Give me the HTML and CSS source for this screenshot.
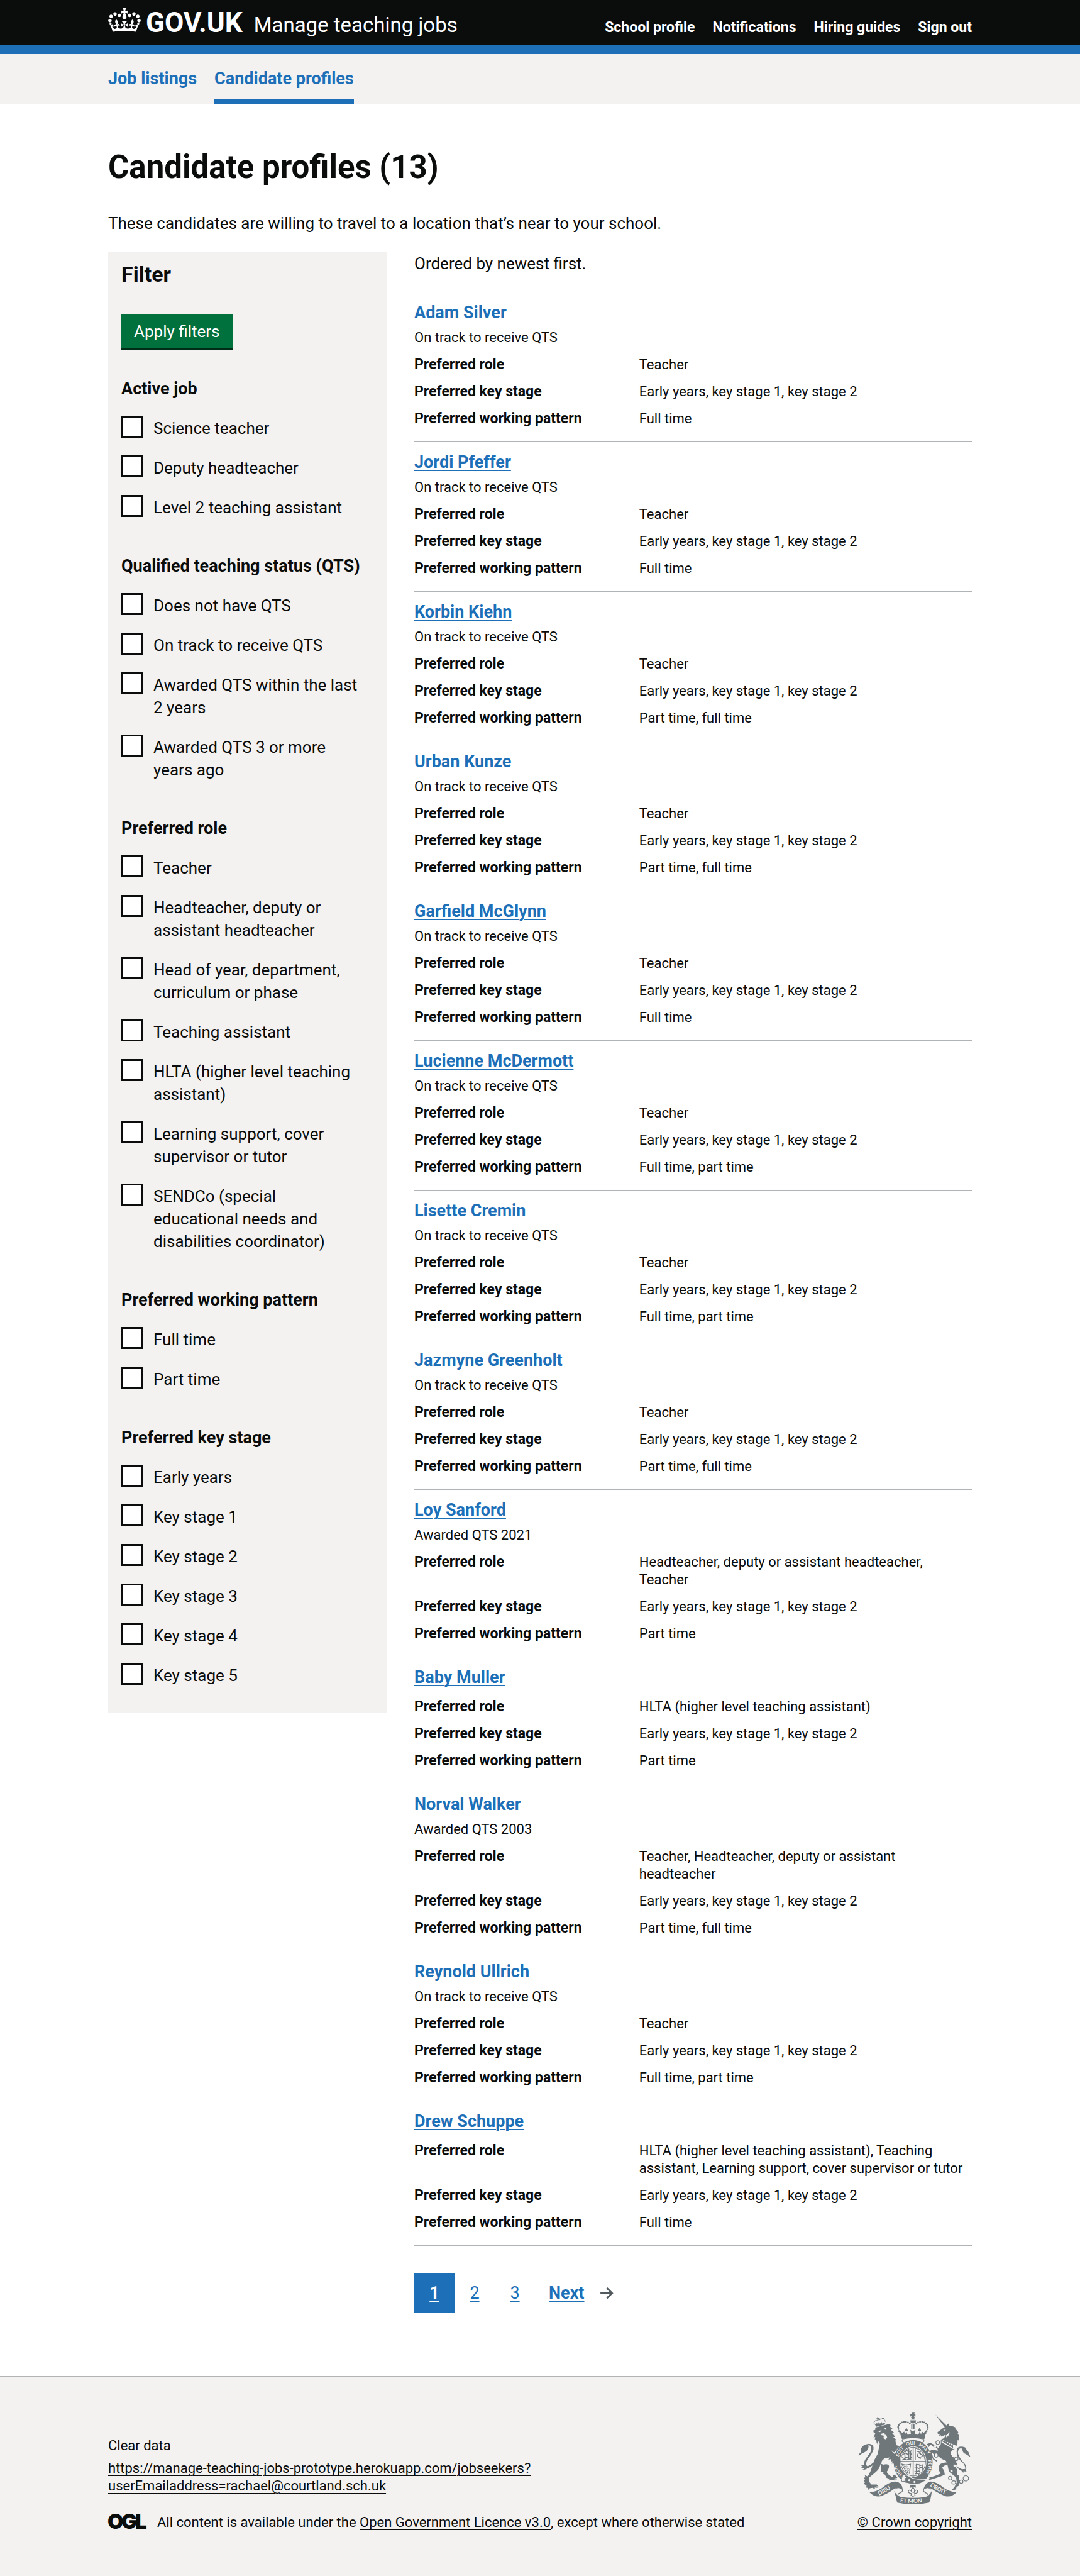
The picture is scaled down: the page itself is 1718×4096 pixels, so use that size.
FILE: index.html
```html
<!DOCTYPE html>
<html lang="en">
<head>
<meta charset="utf-8">
<meta name="viewport" content="width=device-width, initial-scale=1">
<title>Candidate profiles - Manage teaching jobs - GOV.UK</title>
<link rel="stylesheet" href="styles.css">
</head>
<body>
<header class="header">
  <div class="container header-inner">
    <a class="header-logo" href="#">
      <svg class="crown" viewBox="0 0 132 97" aria-hidden="true"><path fill="currentColor" fill-rule="evenodd" d="M25 30.2c3.5 1.5 7.7-.2 9.1-3.7 1.5-3.6-.2-7.8-3.9-9.2-3.6-1.4-7.6.3-9.1 3.9-1.4 3.5.3 7.5 3.9 9zM9 39.5c3.6 1.5 7.8-.2 9.2-3.7 1.5-3.6-.2-7.8-3.9-9.1-3.6-1.5-7.6.2-9.1 3.8-1.4 3.5.3 7.5 3.8 9zM4.4 57.2c3.5 1.5 7.7-.2 9.1-3.8 1.5-3.6-.2-7.7-3.9-9.1-3.5-1.5-7.6.3-9.1 3.8-1.4 3.5.3 7.6 3.9 9.1zm38.3-21.4c3.5 1.5 7.7-.2 9.1-3.8 1.5-3.6-.2-7.7-3.9-9.1-3.6-1.5-7.6.3-9.1 3.8-1.3 3.6.4 7.7 3.9 9.1zm64.4-5.6c-3.6 1.5-7.8-.2-9.1-3.7-1.5-3.6.2-7.8 3.8-9.2 3.6-1.4 7.7.3 9.2 3.9 1.3 3.5-.4 7.5-3.9 9zm15.9 9.3c-3.6 1.5-7.7-.2-9.1-3.7-1.5-3.6.2-7.8 3.7-9.1 3.6-1.5 7.7.2 9.2 3.8 1.5 3.5-.3 7.5-3.8 9zm4.7 17.7c-3.6 1.5-7.8-.2-9.2-3.8-1.5-3.6.2-7.7 3.9-9.1 3.6-1.5 7.7.3 9.2 3.8 1.3 3.5-.4 7.6-3.9 9.1zM89.3 35.8c-3.6 1.5-7.8-.2-9.2-3.8-1.4-3.6.2-7.7 3.9-9.1 3.6-1.5 7.7.3 9.2 3.8 1.4 3.6-.3 7.7-3.9 9.1zM69.7 17.7l8.9 4.7V9.3l-8.9 2.8c-.2-.3-.5-.6-.9-.9L72.4 0H59.6l3.5 11.2c-.3.3-.6.5-.9.9l-8.8-2.8v13.1l8.8-4.7c.3.3.6.7.9.9l-5 15.4v.1c-.2.8-.4 1.6-.4 2.4 0 4.1 3.1 7.5 7 8.1h.2c.3 0 .7.1 1 .1.4 0 .7 0 1-.1h.2c4-.6 7.1-4.1 7.1-8.1 0-.8-.1-1.7-.4-2.4V34l-5.1-15.4c.4-.2.7-.6 1-.9zM66 92.8c16.9 0 32.8 1.1 47.1 3.2 4-16.9 8.9-26.7 14-33.5l-9.6-3.4c1 4.9 1.1 7.2 0 10.2-1.5-1.4-3-4.3-4.2-8.7L108.6 76c2.8-2 5-3.2 7.5-3.3-4.4 9.4-10 11.9-13.6 11.2-4.3-.8-6.3-4.6-5.6-7.9 1-4.7 5.7-5.9 8-.5 4.3-8.7-3-11.4-7.6-8.8 7.1-7.2 7.9-13.5 2.1-21.1-8 6.1-8.1 12.3-4.5 20.8-4.7-5.4-12.1-2.5-9.5 6.2 3.4-5.2 7.9-2 7.2 3.1-.6 4.3-6.4 7.8-13.5 7.2-10.3-.9-10.9-8-11.2-13.8 2.5-.5 7.1 1.8 11 7.3L80.2 60c-4.1 4.4-8 5.3-12.3 5.4 1.4-4.4 8-11.6 8-11.6H55.5s6.4 7.2 7.9 11.6c-4.2-.1-8-1-12.3-5.4l1.4 16.4c3.9-5.5 8.5-7.7 10.9-7.3-.3 5.8-.9 12.8-11.1 13.8-7.2.6-12.9-2.9-13.5-7.2-.7-5 3.8-8.3 7.1-3.1 2.7-8.7-4.6-11.6-9.4-6.2 3.7-8.5 3.6-14.7-4.6-20.8-5.8 7.6-5 13.9 2.2 21.1-4.7-2.6-11.9.1-7.7 8.8 2.3-5.5 7.1-4.2 8.1.5.7 3.3-1.3 7.1-5.7 7.9-3.5.7-9-1.8-13.5-11.2 2.5.1 4.7 1.3 7.5 3.3l-4.7-15.4c-1.2 4.4-2.7 7.2-4.3 8.7-1.1-3-.9-5.3 0-10.2l-9.5 3.4c5 6.9 9.9 16.7 14 33.5 14.8-2.1 30.8-3.2 47.7-3.2z"/></svg>
      <span class="logotype">GOV.UK</span>
    </a>
    <a class="service-name" href="#">Manage teaching jobs</a>
    <nav class="account-nav" aria-label="Account">
      <a href="#">School profile</a>
      <a href="#">Notifications</a>
      <a href="#">Hiring guides</a>
      <a href="#">Sign out</a>
    </nav>
  </div>
</header>
<nav class="primary-nav" aria-label="Primary">
  <div class="container primary-nav-inner">
    <a class="primary-link" href="#">Job listings</a>
    <a class="primary-link primary-link-current" href="#" aria-current="page">Candidate profiles</a>
  </div>
</nav>

<main class="container main">
  <h1 class="page-title">Candidate profiles (13)</h1>
  <p class="intro">These candidates are willing to travel to a location that’s near to your school.</p>
  <div class="columns">
    <form class="filter">
      <h2 class="filter-title">Filter</h2>
      <button class="button" type="button">Apply filters</button>

      <fieldset class="group">
        <legend>Active job</legend>
        <div class="option"><input type="checkbox" id="job-1"><label for="job-1">Science teacher</label></div>
        <div class="option"><input type="checkbox" id="job-2"><label for="job-2">Deputy headteacher</label></div>
        <div class="option"><input type="checkbox" id="job-3"><label for="job-3">Level 2 teaching assistant</label></div>
      </fieldset>

      <fieldset class="group">
        <legend>Qualified teaching status (QTS)</legend>
        <div class="option"><input type="checkbox" id="qts-1"><label for="qts-1">Does not have QTS</label></div>
        <div class="option"><input type="checkbox" id="qts-2"><label for="qts-2">On track to receive QTS</label></div>
        <div class="option"><input type="checkbox" id="qts-3"><label for="qts-3">Awarded QTS within the last 2 years</label></div>
        <div class="option"><input type="checkbox" id="qts-4"><label for="qts-4">Awarded QTS 3 or more years ago</label></div>
      </fieldset>

      <fieldset class="group">
        <legend>Preferred role</legend>
        <div class="option"><input type="checkbox" id="role-1"><label for="role-1">Teacher</label></div>
        <div class="option"><input type="checkbox" id="role-2"><label for="role-2">Headteacher, deputy or assistant headteacher</label></div>
        <div class="option"><input type="checkbox" id="role-3"><label for="role-3">Head of year, department, curriculum or phase</label></div>
        <div class="option"><input type="checkbox" id="role-4"><label for="role-4">Teaching assistant</label></div>
        <div class="option"><input type="checkbox" id="role-5"><label for="role-5">HLTA (higher level teaching assistant)</label></div>
        <div class="option"><input type="checkbox" id="role-6"><label for="role-6">Learning support, cover supervisor or tutor</label></div>
        <div class="option"><input type="checkbox" id="role-7"><label for="role-7">SENDCo (special educational needs and disabilities coordinator)</label></div>
      </fieldset>

      <fieldset class="group">
        <legend>Preferred working pattern</legend>
        <div class="option"><input type="checkbox" id="pattern-1"><label for="pattern-1">Full time</label></div>
        <div class="option"><input type="checkbox" id="pattern-2"><label for="pattern-2">Part time</label></div>
      </fieldset>

      <fieldset class="group">
        <legend>Preferred key stage</legend>
        <div class="option"><input type="checkbox" id="stage-0"><label for="stage-0">Early years</label></div>
        <div class="option"><input type="checkbox" id="stage-1"><label for="stage-1">Key stage 1</label></div>
        <div class="option"><input type="checkbox" id="stage-2"><label for="stage-2">Key stage 2</label></div>
        <div class="option"><input type="checkbox" id="stage-3"><label for="stage-3">Key stage 3</label></div>
        <div class="option"><input type="checkbox" id="stage-4"><label for="stage-4">Key stage 4</label></div>
        <div class="option"><input type="checkbox" id="stage-5"><label for="stage-5">Key stage 5</label></div>
      </fieldset>
    </form>

    <section class="results">
      <p class="order">Ordered by newest first.</p>

      <article class="card">
        <h2><a href="#">Adam Silver</a></h2>
        <p class="status">On track to receive QTS</p>
        <dl>
          <dt>Preferred role</dt><dd>Teacher</dd>
          <dt>Preferred key stage</dt><dd>Early years, key stage 1, key stage 2</dd>
          <dt>Preferred working pattern</dt><dd>Full time</dd>
        </dl>
      </article>

      <article class="card">
        <h2><a href="#">Jordi Pfeffer</a></h2>
        <p class="status">On track to receive QTS</p>
        <dl>
          <dt>Preferred role</dt><dd>Teacher</dd>
          <dt>Preferred key stage</dt><dd>Early years, key stage 1, key stage 2</dd>
          <dt>Preferred working pattern</dt><dd>Full time</dd>
        </dl>
      </article>

      <article class="card">
        <h2><a href="#">Korbin Kiehn</a></h2>
        <p class="status">On track to receive QTS</p>
        <dl>
          <dt>Preferred role</dt><dd>Teacher</dd>
          <dt>Preferred key stage</dt><dd>Early years, key stage 1, key stage 2</dd>
          <dt>Preferred working pattern</dt><dd>Part time, full time</dd>
        </dl>
      </article>

      <article class="card">
        <h2><a href="#">Urban Kunze</a></h2>
        <p class="status">On track to receive QTS</p>
        <dl>
          <dt>Preferred role</dt><dd>Teacher</dd>
          <dt>Preferred key stage</dt><dd>Early years, key stage 1, key stage 2</dd>
          <dt>Preferred working pattern</dt><dd>Part time, full time</dd>
        </dl>
      </article>

      <article class="card">
        <h2><a href="#">Garfield McGlynn</a></h2>
        <p class="status">On track to receive QTS</p>
        <dl>
          <dt>Preferred role</dt><dd>Teacher</dd>
          <dt>Preferred key stage</dt><dd>Early years, key stage 1, key stage 2</dd>
          <dt>Preferred working pattern</dt><dd>Full time</dd>
        </dl>
      </article>

      <article class="card">
        <h2><a href="#">Lucienne McDermott</a></h2>
        <p class="status">On track to receive QTS</p>
        <dl>
          <dt>Preferred role</dt><dd>Teacher</dd>
          <dt>Preferred key stage</dt><dd>Early years, key stage 1, key stage 2</dd>
          <dt>Preferred working pattern</dt><dd>Full time, part time</dd>
        </dl>
      </article>

      <article class="card">
        <h2><a href="#">Lisette Cremin</a></h2>
        <p class="status">On track to receive QTS</p>
        <dl>
          <dt>Preferred role</dt><dd>Teacher</dd>
          <dt>Preferred key stage</dt><dd>Early years, key stage 1, key stage 2</dd>
          <dt>Preferred working pattern</dt><dd>Full time, part time</dd>
        </dl>
      </article>

      <article class="card">
        <h2><a href="#">Jazmyne Greenholt</a></h2>
        <p class="status">On track to receive QTS</p>
        <dl>
          <dt>Preferred role</dt><dd>Teacher</dd>
          <dt>Preferred key stage</dt><dd>Early years, key stage 1, key stage 2</dd>
          <dt>Preferred working pattern</dt><dd>Part time, full time</dd>
        </dl>
      </article>

      <article class="card">
        <h2><a href="#">Loy Sanford</a></h2>
        <p class="status">Awarded QTS 2021</p>
        <dl>
          <dt>Preferred role</dt><dd>Headteacher, deputy or assistant headteacher, Teacher</dd>
          <dt>Preferred key stage</dt><dd>Early years, key stage 1, key stage 2</dd>
          <dt>Preferred working pattern</dt><dd>Part time</dd>
        </dl>
      </article>

      <article class="card">
        <h2><a href="#">Baby Muller</a></h2>
        <dl>
          <dt>Preferred role</dt><dd>HLTA (higher level teaching assistant)</dd>
          <dt>Preferred key stage</dt><dd>Early years, key stage 1, key stage 2</dd>
          <dt>Preferred working pattern</dt><dd>Part time</dd>
        </dl>
      </article>

      <article class="card">
        <h2><a href="#">Norval Walker</a></h2>
        <p class="status">Awarded QTS 2003</p>
        <dl>
          <dt>Preferred role</dt><dd>Teacher, Headteacher, deputy or assistant headteacher</dd>
          <dt>Preferred key stage</dt><dd>Early years, key stage 1, key stage 2</dd>
          <dt>Preferred working pattern</dt><dd>Part time, full time</dd>
        </dl>
      </article>

      <article class="card">
        <h2><a href="#">Reynold Ullrich</a></h2>
        <p class="status">On track to receive QTS</p>
        <dl>
          <dt>Preferred role</dt><dd>Teacher</dd>
          <dt>Preferred key stage</dt><dd>Early years, key stage 1, key stage 2</dd>
          <dt>Preferred working pattern</dt><dd>Full time, part time</dd>
        </dl>
      </article>

      <article class="card">
        <h2><a href="#">Drew Schuppe</a></h2>
        <dl>
          <dt>Preferred role</dt><dd>HLTA (higher level teaching assistant), Teaching assistant, Learning support, cover supervisor or tutor</dd>
          <dt>Preferred key stage</dt><dd>Early years, key stage 1, key stage 2</dd>
          <dt>Preferred working pattern</dt><dd>Full time</dd>
        </dl>
      </article>

      <nav class="pagination" aria-label="Pages">
        <a class="page page-current" href="#" aria-current="page">1</a>
        <a class="page" href="#">2</a>
        <a class="page" href="#">3</a>
        <a class="next" href="#"><span>Next</span>
          <svg class="arrow" viewBox="0 0 15 13" aria-hidden="true"><path fill="#505a5f" d="m8.107 0-1.414 1.414 4.293 4.293H0v2h10.896l-4.185 3.977 1.377 1.449 6.744-6.406z"/></svg>
        </a>
      </nav>
    </section>
  </div>
</main>

<footer class="footer">
  <div class="container footer-inner">
    <div class="footer-meta">
      <p><a href="#">Clear data</a></p>
      <p class="footer-url"><a href="#">https://manage-teaching-jobs-prototype.herokuapp.com/jobseekers?<wbr>userEmailaddress=rachael@courtland.sch.uk</a></p>
      <div class="licence">
        <svg class="ogl" viewBox="0 0 58 24" role="img" aria-label="OGL"><text x="-1 21 43" y="24">OGL</text></svg>
        <p>All content is available under the <a href="#">Open Government Licence v3.0</a>, except where otherwise stated</p>
      </div>
    </div>
    <a class="copyright" href="#">
      <svg class="crest" viewBox="132 113 750 613" aria-hidden="true">
        <defs>
          <path id="garter-hon" d="M427 525A112 112 0 0 1 389 465"/>
          <path id="garter-soit" d="M403 409A102 102 0 0 1 442 350"/>
          <path id="garter-qui" d="M455 335A115 115 0 0 1 530 332"/>
          <path id="garter-mal" d="M534 335A115 115 0 0 1 607 415"/>
          <path id="garter-pense" d="M597 432A105 105 0 0 1 558 548"/>
          <path id="band-dieu" d="M272 667Q330 640 373 603"/>
          <path id="band-mon" d="M411 712Q498 722 586 710"/>
          <path id="band-droit" d="M610 602Q655 640 738 667"/>
        </defs>
        <g fill="#6f777b">
          <!-- lion -->
          <path d="M246 214L338 190L348 196L346 210L362 222L350 228L372 248L358 250L380 276L366 278L388 296L380 300L386 330L408 340L396 352L372 380L346 362L370 386L400 412L404 440L396 452L408 470L392 460L394 474L380 458L376 470L366 450L356 456L362 438L352 440L352 424L334 428L340 412L326 418L310 416L290 436L286 456L300 462Q330 452 338 470Q338 490 322 510Q340 540 366 544L362 532L376 528L394 550L378 552L392 560L372 560L374 568L356 562L336 568L340 556L322 550L310 528L298 522L302 508L282 508L284 478L280 456Q278 490 238 520L206 546L204 574L220 594L256 594L268 606L252 606L262 616L242 614L244 624L226 616L206 620L196 634L194 616L184 614L188 602L170 588L178 578L166 564L178 560L170 548L180 546L176 532L196 540Q220 500 226 468L242 426L262 390L276 322L264 300L258 326L250 290L242 298L246 276L234 282L246 254L234 244L234 232L246 230Z"/>
          <path d="M134 402Q138 384 152 376L148 360Q160 326 204 322Q240 326 234 360Q228 384 196 424Q178 456 190 470Q204 474 234 446L228 466Q206 484 196 484Q180 500 160 494L174 490L150 478L168 476L150 466L172 460Q168 448 180 426L214 378Q226 348 212 334L200 330Q206 360 178 376Q158 384 134 402Z"/>
          <path d="M254 208L238 186L246 190L250 198L256 180L264 194L270 174L278 190L286 172L292 188L300 180L308 188L314 176L310 194Z"/>
          <g fill="none" stroke="#6f777b" stroke-width="6" stroke-dasharray="5 4"><path d="M240 192Q230 166 264 166M274 162Q306 136 312 176"/></g>
          <path d="M258 144L270 148L268 166L260 166Z"/><path d="M254 152h22v6h-22z"/>
          <!-- unicorn -->
          <path d="M648 128L722 200L734 186L742 202Q776 206 784 216L780 222Q802 240 802 252L796 252L806 270L802 276L808 304L796 296L794 336L780 332L686 290L698 288L720 268L706 264L690 276L682 264L672 270L676 260L664 258L662 244L698 218L710 212Z"/>
          <path d="M684 296L776 356Q748 366 750 390Q760 410 776 418L792 458L782 476L794 498L790 530L804 534L806 600L788 612L786 624L770 634L758 630L776 608L790 580L786 546L738 508L728 460Q704 466 692 482L706 500L710 528Q690 540 628 558L598 566L610 556L606 546L640 538L684 520L670 498Q664 462 694 450L724 446L714 432Q686 426 668 404Q642 402 622 378L634 418L658 434L656 442L632 426L622 404L608 370L628 362L664 368L660 350L640 348L620 330L610 332L604 344L590 324L614 316L646 332L666 350L684 324Z"/>
          <path d="M794 350Q812 334 846 346Q854 362 868 376L882 412Q866 400 850 390Q826 382 828 354Q798 346 798 384Q806 420 846 458Q862 490 848 498L858 510L836 504L834 516L822 502L804 492L786 470L806 484L826 492L848 490Q846 456 818 438Q778 396 794 350Z"/>
          <g fill="#f3f2f1" stroke="#6f777b" stroke-width="5"><ellipse cx="663" cy="314" rx="12" ry="13"/><ellipse cx="653" cy="398" rx="12" ry="14"/><circle cx="787" cy="423" r="12"/><ellipse cx="746" cy="551" rx="11" ry="13"/><ellipse cx="770" cy="580" rx="13" ry="11"/><ellipse cx="820" cy="575" rx="12" ry="11"/><circle cx="851" cy="553" r="18"/></g>
          <g fill="#f3f2f1"><circle cx="645" cy="340" r="9"/><circle cx="777" cy="469" r="9"/><circle cx="755" cy="503" r="8"/><path d="M692 292L778 348L768 358L688 312Z"/><path d="M716 268Q742 254 736 232Q752 256 722 280Z"/><path d="M700 228L718 228L706 236Z"/></g>
          <path d="M696 294l6 12 6-8 4 16 10-12 4 20 10-14 4 20 10-12 2 20 12-12 2 26-72-44z"/>
          <g fill="#f3f2f1"><path d="M262 238l26-6-10 12zM302 222l20-8-6 14zM284 256l26-8-4 12 14 4 6 18-12 10-14-8 4-16-18-4z"/></g>
          <!-- central crown -->
          <path d="M488 114h22l-6 12 10-4v18l-10-4 6 12h-26l6-12-10 4v-18l10 4zM482 160q16-22 32 0zM480 166h38l-2 14q-18 12-34 0zM486 192h8v30h-8zM500 192h8v30h-8z"/>
          <g fill="none" stroke="#6f777b" stroke-width="12" stroke-linecap="round" stroke-dasharray="0 14"><path d="M420 262Q380 206 416 184Q446 164 478 188M574 262Q616 206 580 184Q550 164 520 188"/></g>
          <path d="M408 234L426 248L440 240L444 262L454 238L444 234L454 214L464 234L454 240L462 262L484 258L480 228L496 240L514 228L512 258L534 262L542 240L532 234L542 214L552 234L544 240L552 262L556 240L570 248L586 234Q582 262 574 290Q498 272 424 290Q418 262 408 234Z"/>
          <path d="M430 290Q498 274 568 290L572 304L560 316Q498 286 438 316L424 304Z" fill="#f3f2f1" stroke="#6f777b" stroke-width="5"/>
          <!-- garter and shield -->
          <ellipse cx="499" cy="445" rx="130" ry="148"/>
          <ellipse cx="499" cy="441" rx="89" ry="102" fill="#f3f2f1"/>
          <ellipse cx="499" cy="441" rx="83" ry="96" fill="none" stroke="#6f777b" stroke-width="4"/>
          <path d="M496 340h6v204h-6zM412 437h174v7H412z"/>
          <g fill="none" stroke="#6f777b" stroke-width="6"><path d="M430 368l18 6 10-8 8 10 24-8M434 392l14-8 14 8 12-8 16 8M424 414l16 6 12-10 16 10 20-8M426 430l20-6 10 6 14-8 18 8M444 362v66M470 354v76M482 370v56"/><path d="M508 462l14 4 10-8 12 10 20-6M508 484l16-4 10 8 14-8 20 4M508 506l14 4 12-8 12 8M512 524l16-4 12 6M520 456v70M544 456v66M560 460v40"/><path d="M514 352q54 10 64 78h-64z" stroke-width="4"/><path d="M522 372l20 6 8 14 16 6-14 12-20 8M534 384l-8 18 12 10 10 12M548 370l-6 20" /></g>
          <g fill="none" stroke="#6f777b" stroke-width="5"><path d="M424 458q24 10 58 0l-8 62q-20-4-30-26z"/><path d="M436 466l30 48M446 468l24 36M456 468l18 26" stroke-width="3"/></g>
          <!-- buckle -->
          <path d="M420 556Q430 524 458 532L494 552Q534 560 572 558L590 566L546 588Q498 598 446 582L430 574Z" stroke="#f3f2f1" stroke-width="5"/>
          <path d="M424 574Q416 548 436 530L454 528L446 540L462 546L448 552L446 566L456 574L438 572Z" fill="#f3f2f1" stroke="#6f777b" stroke-width="4"/>
          <g fill="#f3f2f1"><circle cx="473" cy="565" r="7"/><circle cx="508" cy="577" r="7"/></g>
          <!-- pendant -->
          <path d="M480 598h36v18q-18-8-36 0z"/>
          <path d="M498 612l12 18-6 20q12-28 24-14q4 14-10 16l-10 2 4 12-14 8-14-8 4-12-10-2q-14-2-10-16q12-14 24 14l-6-20z" fill="#f3f2f1" stroke="#6f777b" stroke-width="5"/>
          <!-- motto band -->
          <path d="M208 646Q250 644 290 618Q340 576 380 574Q426 580 430 630Q400 606 374 622Q330 656 280 672Q240 680 208 646Z"/>
          <path d="M788 646Q746 644 706 618Q656 576 616 574Q580 580 566 630Q596 606 622 622Q670 656 716 672Q756 680 788 646Z"/>
          <path d="M376 626Q396 606 424 622Q436 640 412 650Q396 654 400 664M620 626Q600 606 572 622Q560 640 584 650Q600 654 596 664" fill="#f3f2f1" stroke="#6f777b" stroke-width="5"/>
          <path d="M372 636Q390 672 420 678Q498 688 580 678Q606 672 624 636Q618 690 606 714Q498 738 392 714Q384 676 372 636Z"/>
        </g>
        <g class="motto">
          <text><textPath href="#garter-hon">HON</textPath></text>
          <text><textPath href="#garter-soit">SOIT</textPath></text>
          <text><textPath href="#garter-qui">QUI</textPath></text>
          <text><textPath href="#garter-mal">MAL Y</textPath></text>
          <text><textPath href="#garter-pense">PENSE</textPath></text>
        </g>
        <g class="motto motto-band">
          <text><textPath href="#band-dieu">DIEU</textPath></text>
          <text><textPath href="#band-mon">ET MON</textPath></text>
          <text><textPath href="#band-droit">DROIT</textPath></text>
        </g>
      </svg>
      <span>© Crown copyright</span>
    </a>
  </div>
</footer>
</body>
</html>
```
FILE: styles.css
```css
* { box-sizing: border-box; }

body {
  margin: 0;
  background: #fff;
  color: #0b0c0c;
  font-family: Roboto, "Liberation Sans", Arial, sans-serif;
  font-size: 26px;
  line-height: 36px;
}

h1, h2, p, dl, dd { margin: 0; }

a { text-underline-offset: 4px; text-decoration-thickness: 1px; }

.container {
  width: 80%;
  max-width: 1374px;
  margin: 0 auto;
}

/* Header */
.header {
  background: #0b0c0c;
  border-bottom: 14px solid #1d70b8;
}
.header-inner {
  display: flex;
  align-items: baseline;
  height: 72px;
  padding-top: 10px;
}
.header a {
  color: #fff;
  text-decoration: none;
}
.header-logo {
  display: flex;
  align-items: baseline;
  gap: 8px;
}
.crown {
  width: 52px;
  height: 38px;
  margin-bottom: -2px;
}
.logotype {
  font-size: 44px;
  font-weight: 700;
  line-height: 52px;
}
.service-name {
  margin-left: 18px;
  font-size: 33px;
}
.account-nav {
  display: flex;
  gap: 28px;
  margin-left: auto;
  font-size: 23px;
  font-weight: 700;
}

.primary-nav { background: #f3f2f1; }
.primary-nav-inner {
  display: flex;
  gap: 28px;
}
.primary-link {
  padding: 21px 0 15px;
  border-bottom: 7px solid transparent;
  color: #1d70b8;
  font-size: 27px;
  font-weight: 700;
  text-decoration: none;
}
.primary-link-current { border-color: #1d70b8; }

/* Main */
.main { padding: 72px 0 100px; }
.page-title {
  font-size: 51px;
  line-height: 58px;
}
.intro { margin: 42px 0 28px; }
.columns {
  display: grid;
  grid-template-columns: 444fr 887fr;
  gap: 43px;
  align-items: start;
}

/* Filter */
.filter {
  padding: 17px 21px 0;
  background: #f3f2f1;
}
.filter-title {
  font-size: 34px;
  line-height: 36px;
}
.button {
  margin: 46px 0 0;
  padding: 9px 20px;
  border: 0;
  border-bottom: 3px solid #002d18;
  background: #00703c;
  color: #fff;
  font: inherit;
}
.group {
  margin: 43px 0 0;
  padding: 0 0 16px;
  border: 0;
}
.group + .group { margin-top: 16px; }
.group legend {
  margin-bottom: 25px;
  padding: 0;
  font-size: 27px;
  font-weight: 700;
}
.option {
  display: flex;
  gap: 16px;
  margin-bottom: 25px;
}
.option input {
  flex: none;
  width: 35px;
  height: 35px;
  margin: 0;
  border: 3px solid #0b0c0c;
  background: #fff;
  appearance: none;
}
.option label { padding: 2px 21px 0 0; }

/* Results */
.order { margin-bottom: 28px; }
.card {
  padding: 14px 0 22px;
  border-bottom: 1px solid #b1b4b6;
  font-size: 22px;
  line-height: 28px;
}
.card h2 {
  font-size: 27px;
  line-height: 36px;
}
.card h2 a { color: #1d70b8; }
.status { margin-top: 8px; }
.card dl {
  display: grid;
  grid-template-columns: 2fr 3fr;
  gap: 15px 5px;
  margin-top: 15px;
}
.card dt {
  font-size: 23px;
  font-weight: 700;
}

.pagination {
  display: flex;
  margin-top: 43px;
  font-size: 27px;
  line-height: 64px;
}
.page {
  width: 64px;
  color: #1d70b8;
  text-align: center;
}
.page-current {
  background: #1d70b8;
  color: #fff;
  font-weight: 700;
}
.next {
  display: flex;
  align-items: center;
  gap: 25px;
  margin-left: 22px;
  color: #1d70b8;
  font-weight: 700;
  text-decoration: none;
}
.next span { text-decoration: underline 1px; }
.arrow {
  width: 21px;
  height: 18px;
}

/* Footer */
.footer {
  padding: 57px 0 72px;
  border-top: 1px solid #b1b4b6;
  background: #f3f2f1;
  font-size: 22px;
  line-height: 28px;
}
.footer a { color: inherit; }
.footer-inner {
  display: flex;
  align-items: flex-end;
  justify-content: space-between;
}
.footer-url {
  max-width: 800px;
  margin-top: 8px;
}
.licence {
  display: flex;
  gap: 20px;
  margin-top: 30px;
}
.ogl {
  width: 58px;
  height: 24px;
  overflow: visible;
}
.ogl text {
  font: 900 33px Inter, sans-serif;
  fill: #0b0c0c;
}
.copyright {
  display: flex;
  flex-direction: column;
  align-items: center;
  gap: 15px;
}
.crest {
  width: 179px;
  height: 146px;
}
.motto {
  fill: #f3f2f1;
  font: 700 30px Lato, sans-serif;
}
.motto-band { font-size: 38px; }
```
